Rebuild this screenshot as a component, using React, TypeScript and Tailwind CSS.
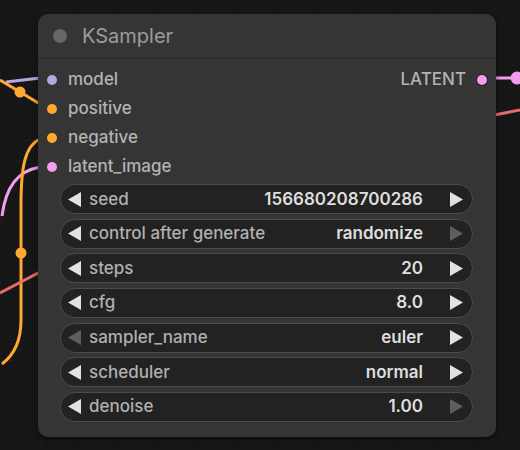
const font = { fontFamily: "Inter, 'Liberation Sans', sans-serif" }

type Widget = {
    label: string
    value: string
    leftOff?: boolean
    rightOff?: boolean
}

const widgets: Widget[] = [
    { label: "seed", value: "156680208700286" },
    { label: "control after generate", value: "randomize", rightOff: true },
    { label: "steps", value: "20" },
    { label: "cfg", value: "8.0" },
    { label: "sampler_name", value: "euler", leftOff: true },
    { label: "scheduler", value: "normal" },
    { label: "denoise", value: "1.00", rightOff: true },
]

const inputs = [
    { name: "model", color: "bg-[#b6a5e2]" },
    { name: "positive", color: "bg-[#ffa931]" },
    { name: "negative", color: "bg-[#ffa931]" },
    { name: "latent_image", color: "bg-[#f29df0]" },
]

function Arrow({ dir, off }: { dir: "left" | "right"; off?: boolean }) {
    const fill = off ? "#5e5e5e" : "#e2e2e2"
    return (
        <svg width="13" height="15" viewBox="0 0 13 15" className="shrink-0">
            {dir === "left" ? (
                <polygon points="13,0 13,15 0,7.5" fill={fill} />
            ) : (
                <polygon points="0,0 0,15 13,7.5" fill={fill} />
            )}
        </svg>
    )
}

function Wires() {
    return (
        <svg className="absolute inset-0" width="520" height="450">
            <defs>
                <pattern id="grid" width="10" height="10" patternUnits="userSpaceOnUse">
                    <path d="M10 0 L0 0 0 10" fill="none" stroke="#1b1b1b" strokeWidth="1" />
                </pattern>
            </defs>
            <rect width="520" height="450" fill="#161616" />
            <rect width="520" height="450" fill="url(#grid)" />

            {/* left side links */}
            <path d="M6 82 L40 78" stroke="#b6a5e2" strokeWidth="3" fill="none" />
            <path d="M0 80 L20 92 L40 104" stroke="#ffa931" strokeWidth="3" fill="none" />
            <circle cx="20" cy="92" r="5.5" fill="#ffa931" />
            <path d="M40 167 C 18 171, 6 186, 2 216" stroke="#f29df0" strokeWidth="3" fill="none" />
            <path d="M40 139 C 24 146, 21 170, 21 205 L21 320 C 21 340, 14 355, 2 364" stroke="#ffa931" strokeWidth="3" fill="none" />
            <circle cx="21" cy="253" r="5.5" fill="#ffa931" />
            <path d="M0 293 L40 272" stroke="#e86a6a" strokeWidth="3" fill="none" />

            {/* right side links */}
            <path d="M486 78 L520 78" stroke="#f29df0" strokeWidth="3" fill="none" />
            <circle cx="517" cy="78" r="6.5" fill="#f29df0" />
            <path d="M494 115 L520 110" stroke="#e86a6a" strokeWidth="3" fill="none" />
        </svg>
    )
}

export default function App() {
    return (
        <div className="relative w-[520px] h-[450px] overflow-hidden bg-[#161616] select-none" style={font}>
            <Wires />

            {/* KSampler node */}
            <div className="absolute left-[38px] top-[14px] w-[458px] h-[423px] rounded-[10px] bg-[#353535] shadow-[0_2px_6px_rgba(0,0,0,0.5)] flex flex-col">
                <div className="h-[45px] shrink-0 flex items-center gap-[15px] pl-[15px] border-b border-[#2b2b2b]">
                    <div className="w-[14px] h-[14px] rounded-full bg-[#666666]" />
                    <span className="text-[20px] text-[#9c9c9c] leading-none">KSampler</span>
                </div>

                <div className="pt-[6px] relative">
                    {inputs.map((s) => (
                        <div key={s.name} className="h-[29px] flex items-center pl-[9px] gap-[11px]">
                            <div className={"w-[10px] h-[10px] rounded-full " + s.color} />
                            <span className="text-[17px] font-medium text-[#b3b3b3] leading-none">{s.name}</span>
                        </div>
                    ))}
                    <div className="absolute top-[6px] right-[9px] h-[29px] flex items-center gap-[11px]">
                        <span className="text-[17px] font-medium text-[#b3b3b3] leading-none">LATENT</span>
                        <div className="w-[10px] h-[10px] rounded-full bg-[#f29df0] ring-1 ring-[#222]" />
                    </div>
                </div>

                <div className="flex flex-col gap-[4.67px] mt-[3px] pl-[22px] pr-[23px]">
                    {widgets.map((w) => (
                        <div
                            key={w.label}
                            className="h-[30px] rounded-full bg-[#222222] border-[1.5px] border-[#4b4b4b] flex items-center pl-[7px] pr-[9px]"
                        >
                            <Arrow dir="left" off={w.leftOff} />
                            <span className="ml-[8px] text-[17px] font-medium text-[#b0b0b0] leading-none">{w.label}</span>
                            <span className="ml-auto text-[17px] font-semibold text-[#dedede] leading-none">{w.value}</span>
                            <span className="ml-[27px]">
                                <Arrow dir="right" off={w.rightOff} />
                            </span>
                        </div>
                    ))}
                </div>
            </div>
        </div>
    )
}
